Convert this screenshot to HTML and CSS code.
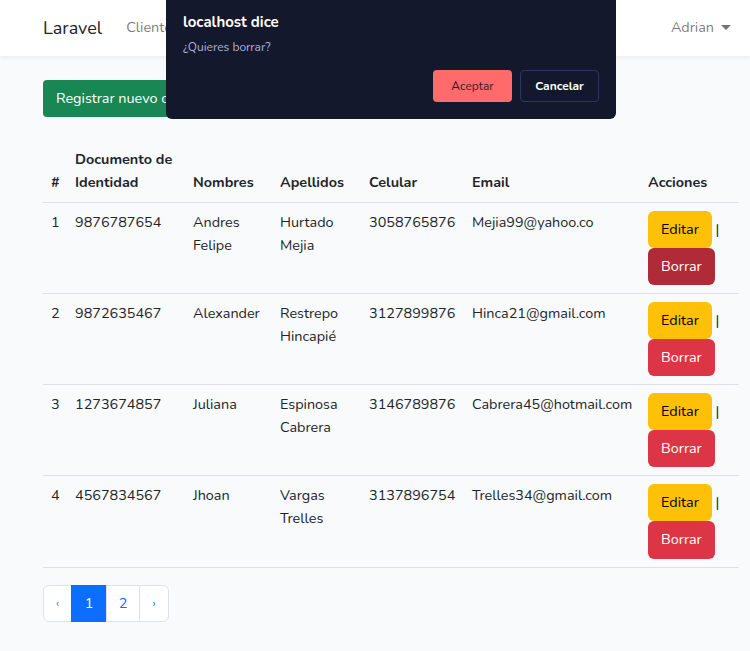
FILE: index.html
```html
<!DOCTYPE html>
<html lang="es">
<head>
<meta charset="utf-8">
<title>Laravel</title>
<link rel="stylesheet" href="styles.css">
</head>
<body>
<nav class="navbar">
  <div class="nav-left">
    <a class="brand">Laravel</a>
    <a class="nav-link">Clientes</a>
  </div>
  <a class="nav-user">Adrian <span class="caret"></span></a>
</nav>
<main class="main">
  <a class="btn btn-success">Registrar nuevo cliente</a>
  <table class="table">
    <colgroup>
      <col class="c1"><col class="c2"><col class="c3"><col class="c4"><col class="c5"><col class="c6"><col class="c7">
    </colgroup>
    <thead>
      <tr><th>#</th><th>Documento de Identidad</th><th>Nombres</th><th>Apellidos</th><th>Celular</th><th>Email</th><th>Acciones</th></tr>
    </thead>
    <tbody>
      <tr><td>1</td><td>9876787654</td><td>Andres Felipe</td><td>Hurtado Mejia</td><td>3058765876</td><td>Mejia99@yahoo.co</td>
        <td><a class="btn btn-warning">Editar</a> | <form class="del"><button type="button" class="btn btn-danger active">Borrar</button></form></td></tr>
      <tr><td>2</td><td>9872635467</td><td>Alexander</td><td>Restrepo Hincapié</td><td>3127899876</td><td>Hinca21@gmail.com</td>
        <td><a class="btn btn-warning">Editar</a> | <form class="del"><button type="button" class="btn btn-danger">Borrar</button></form></td></tr>
      <tr><td>3</td><td>1273674857</td><td>Juliana</td><td>Espinosa Cabrera</td><td>3146789876</td><td>Cabrera45@hotmail.com</td>
        <td><a class="btn btn-warning">Editar</a> | <form class="del"><button type="button" class="btn btn-danger">Borrar</button></form></td></tr>
      <tr><td>4</td><td>4567834567</td><td>Jhoan</td><td>Vargas Trelles</td><td>3137896754</td><td>Trelles34@gmail.com</td>
        <td><a class="btn btn-warning">Editar</a> | <form class="del"><button type="button" class="btn btn-danger">Borrar</button></form></td></tr>
    </tbody>
  </table>
  <ul class="pagination">
    <li class="page prev">&lsaquo;</li>
    <li class="page current">1</li>
    <li class="page">2</li>
    <li class="page next">&rsaquo;</li>
  </ul>
</main>
<div class="dialog">
  <div class="dialog-title">localhost dice</div>
  <div class="dialog-msg">¿Quieres borrar?</div>
  <div class="dialog-actions">
    <button type="button" class="dbtn accept">Aceptar</button>
    <button type="button" class="dbtn cancel">Cancelar</button>
  </div>
</div>
</body>
</html>
```
FILE: styles.css
```css
* { box-sizing: border-box; }
html, body { margin: 0; padding: 0; }
body {
  font-family: "Nunito", "Lato", "Open Sans", sans-serif;
  font-size: 14.4px;
  line-height: 1.6;
  color: #212529;
  background: #f8fafc;
  width: 750px;
  height: 651px;
  overflow: hidden;
  position: relative;
}
.navbar {
  height: 56px;
  background: #fff;
  box-shadow: 0 2px 4px rgba(0,0,0,.06);
  display: flex;
  align-items: center;
  justify-content: space-between;
  padding: 0 19px 0 43px;
}
.nav-left { display: flex; align-items: center; }
.brand { font-size: 18px; color: #212529; margin-right: 24px; }
.nav-link { color: rgba(0,0,0,.55); }
.nav-user { color: rgba(0,0,0,.55); display: flex; align-items: center; }
.caret {
  display: inline-block;
  margin-left: 7px;
  border-top: 5px solid rgba(0,0,0,.55);
  border-left: 5px solid transparent;
  border-right: 5px solid transparent;
}
.main { padding: 24px 11px 0 43px; }
.btn {
  display: inline-block;
  font-family: inherit;
  font-size: 14.4px;
  line-height: 1.6;
  padding: 6px 12px;
  border: 1px solid transparent;
  border-radius: 6px;
  text-align: center;
  cursor: pointer;
}
.btn-success { background: #198754; color: #fff; border-radius: 4px; }
.btn-warning { background: #ffc107; color: #000; }
.btn-danger { background: #dc3545; color: #fff; }
.btn-danger.active { background: #b02a37; }
.del { margin: 0; }
.table {
  width: 696px;
  table-layout: fixed;
  border-collapse: collapse;
  margin-top: 23px;
  margin-bottom: 17px;
}
.c1 { width: 24px; } .c2 { width: 118px; } .c3 { width: 87px; } .c4 { width: 89px; }
.c5 { width: 103px; } .c6 { width: 176px; } .c7 { width: 99px; }
.table th, .table td { padding: 8px; text-align: left; border-bottom: 1px solid #dee2e6; }
.table th { font-weight: 700; vertical-align: bottom; }
.table td { vertical-align: top; }
.table td:last-child { padding-right: 0; }
.pagination {
  list-style: none;
  margin: 0;
  padding: 0;
  display: flex;
}
.page {
  height: 37px;
  padding: 6px 12px;
  color: #0d6efd;
  background: #fff;
  border: 1px solid #dee2e6;
  margin-left: -1px;
}
.page.prev { margin-left: 0; border-radius: 6px 0 0 6px; color: #6c757d; width: 29px; padding: 6px 0; text-align: center; font-size: 12px; line-height: 23px; }
.page.next { border-radius: 0 6px 6px 0; width: 30px; padding: 6px 0; text-align: center; font-size: 12px; line-height: 23px; }
.page.current { background: #0d6efd; border-color: #0d6efd; color: #fff; width: 36px; text-align: center; padding: 6px 0; }
.page:nth-child(3) { width: 34px; text-align: center; padding: 6px 0; }
.dialog {
  position: absolute;
  top: 0;
  left: 166px;
  width: 450px;
  height: 119px;
  background: #13182c;
  border-radius: 0 0 6px 6px;
  padding: 12px 17px;
  color: #fff;
}
.dialog-title { font-weight: 700; font-size: 15px; line-height: 20px; }
.dialog-msg { font-size: 12px; color: #aab4d6; margin-top: 7px; line-height: 16px; }
.dialog-actions { display: flex; justify-content: flex-end; gap: 8px; margin-top: 15px; }
.dbtn {
  font-family: inherit;
  font-size: 12px;
  width: 79px;
  height: 32px;
  border-radius: 4px;
  border: 1px solid transparent;
}
.accept { background: #ff6b6b; color: #3a1c1c; }
.cancel { background: transparent; border-color: #2c3566; color: #fff; font-weight: 700; width: 79px; }
```
